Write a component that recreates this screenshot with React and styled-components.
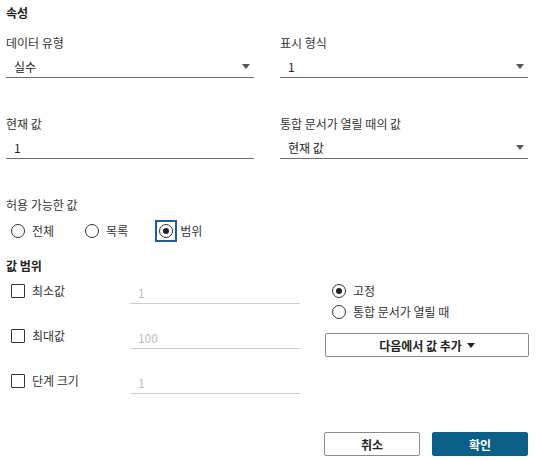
import React from "react"
import styled, { createGlobalStyle } from "styled-components"

const Global = createGlobalStyle`
  body {
    margin: 0;
    background: #fff;
    font-family: 'Noto Sans CJK KR', 'Noto Sans', sans-serif;
    font-size: 12px;
    color: #333;
  }
`

const Page = styled.div`
  width: 541px;
  height: 460px;
  box-sizing: border-box;
  padding: 5px 13px 0 6px;
  display: flex;
  flex-direction: column;
`

const Heading = styled.div`
  font-weight: 700;
  line-height: 16px;
  color: #222;
  margin-top: ${p => p.top || 0}px;
`

const Grid = styled.div`
  display: grid;
  grid-template-columns: 248px 248px;
  column-gap: 26px;
  row-gap: 38px;
  margin-top: 14px;
`

const Field = styled.div`
  display: flex;
  flex-direction: column;
`

const Label = styled.div`
  line-height: 16px;
  color: #333;
  margin-top: ${p => p.top || 0}px;
`

const Select = styled.div`
  display: flex;
  align-items: center;
  justify-content: space-between;
  height: 22px;
  margin-top: 4px;
  padding: 0 4px 0 8px;
  border-bottom: 1px solid #6e6e6e;
  color: #222;
`

const Arrow = styled.span`
  width: 0;
  height: 0;
  border-left: 4px solid transparent;
  border-right: 4px solid transparent;
  border-top: 5px solid #555;
`

const RadioRow = styled.div`
  display: flex;
  align-items: center;
  height: 24px;
  margin-top: 6px;
  padding-left: 5px;
`

const RadioItem = styled.label`
  display: flex;
  align-items: center;
  gap: 7px;
  margin-right: ${p => p.gap || 0}px;
  line-height: 16px;
`

const Focus = styled.span`
  display: flex;
  align-items: center;
  justify-content: center;
  width: 22px;
  height: 22px;
  margin: -4px -4px -4px -4px;
  box-sizing: border-box;
  border: 2px solid #1a5da6;
`

const Circle = styled.span`
  width: 14px;
  height: 14px;
  box-sizing: border-box;
  border-radius: 50%;
  border: 1.5px solid #333;
  display: flex;
  align-items: center;
  justify-content: center;
  &::after {
    content: '';
    width: 6px;
    height: 6px;
    border-radius: 50%;
    background: #222;
    display: ${p => (p.checked ? "block" : "none")};
  }
`

const RangeArea = styled.div`
  display: flex;
  margin-top: 9px;
`

const RangeLeft = styled.div`
  display: flex;
  flex-direction: column;
  gap: 24px;
  width: 294px;
`

const CheckRow = styled.div`
  display: flex;
  align-items: flex-start;
  height: 21px;
`

const CheckLabel = styled.label`
  display: flex;
  align-items: center;
  gap: 7px;
  width: 121px;
  padding-left: 5px;
  line-height: 16px;
`

const Box = styled.span`
  width: 14px;
  height: 14px;
  box-sizing: border-box;
  border: 1.5px solid #333;
  border-radius: 1px;
`

const DisabledInput = styled.div`
  width: 173px;
  height: 21px;
  box-sizing: border-box;
  padding: 3px 0 0 8px;
  line-height: 14px;
  color: #bdbdbd;
  border-bottom: 1px solid #cfcfcf;
`

const RangeRight = styled.div`
  display: flex;
  flex-direction: column;
  padding-left: 25px;
`

const RadioStack = styled.div`
  display: flex;
  flex-direction: column;
  gap: 5px;
  padding-left: 7px;
`

const Button = styled.button`
  font-family: inherit;
  font-size: 12px;
  font-weight: 700;
  height: 24px;
  width: ${p => p.w}px;
  border-radius: 2px;
  border: 1px solid ${p => (p.primary ? "#0b6088" : "#8a8a8a")};
  background: ${p => (p.primary ? "#0b6088" : "#fff")};
  color: ${p => (p.primary ? "#fff" : "#222")};
  padding: 0;
  display: flex;
  align-items: center;
  justify-content: center;
  gap: 5px;
`

const SmallArrow = styled.span`
  width: 0;
  height: 0;
  border-left: 4px solid transparent;
  border-right: 4px solid transparent;
  border-top: 5px solid #222;
`

const AddButton = styled(Button)`
  margin-top: 13px;
`

const Footer = styled.div`
  display: flex;
  justify-content: flex-end;
  gap: 12px;
  margin-top: auto;
  margin-bottom: 4px;
`

const fields = [
  { label: "데이터 유형", value: "실수", select: true },
  { label: "표시 형식", value: "1", select: true },
  { label: "현재 값", value: "1", select: false },
  { label: "통합 문서가 열릴 때의 값", value: "현재 값", select: true },
]

const ranges = [
  { label: "최소값", value: "1" },
  { label: "최대값", value: "100" },
  { label: "단계 크기", value: "1" },
]

export default function App() {
  return (
    <>
      <Global />
      <Page>
        <Heading>속성</Heading>
        <Grid>
          {fields.map(f => (
            <Field key={f.label}>
              <Label>{f.label}</Label>
              <Select>
                <span>{f.value}</span>
                {f.select && <Arrow />}
              </Select>
            </Field>
          ))}
        </Grid>

        <Label top={38}>허용 가능한 값</Label>
        <RadioRow>
          <RadioItem gap={31}><Circle />전체</RadioItem>
          <RadioItem gap={31}><Circle />목록</RadioItem>
          <RadioItem>
            <Focus><Circle checked /></Focus>
            범위
          </RadioItem>
        </RadioRow>

        <Heading top={15}>값 범위</Heading>
        <RangeArea>
          <RangeLeft>
            {ranges.map(r => (
              <CheckRow key={r.label}>
                <CheckLabel><Box />{r.label}</CheckLabel>
                <DisabledInput>{r.value}</DisabledInput>
              </CheckRow>
            ))}
          </RangeLeft>
          <RangeRight>
            <RadioStack>
              <RadioItem><Circle checked />고정</RadioItem>
              <RadioItem><Circle />통합 문서가 열릴 때</RadioItem>
            </RadioStack>
            <AddButton w={204}>다음에서 값 추가 <SmallArrow /></AddButton>
          </RangeRight>
        </RangeArea>

        <Footer>
          <Button w={96}>취소</Button>
          <Button w={96} primary>확인</Button>
        </Footer>
      </Page>
    </>
  )
}
